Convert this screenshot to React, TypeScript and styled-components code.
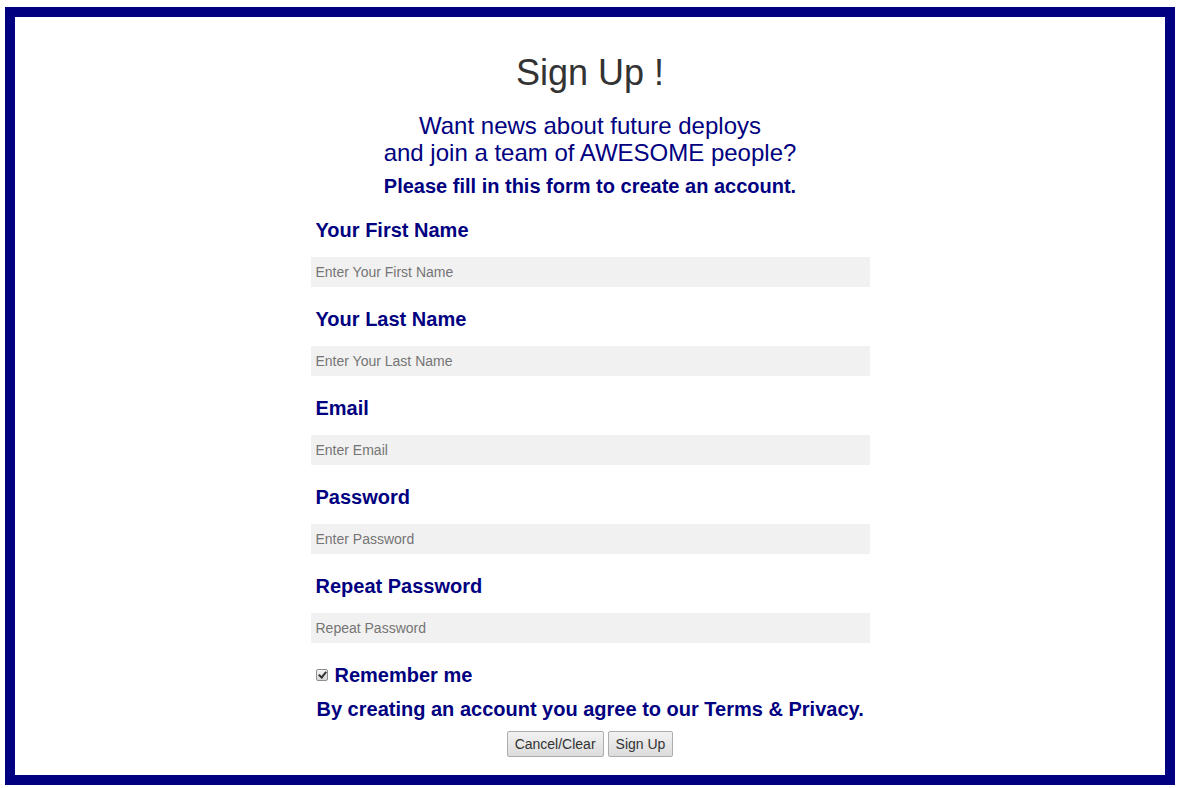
import { createGlobalStyle } from 'styled-components';
import styled from 'styled-components';

const GlobalStyle = createGlobalStyle`
  html, body {
    margin: 0;
    padding: 0;
    background: #fff;
    font-family: 'Liberation Sans', Arial, sans-serif;
  }
  * { box-sizing: border-box; }
`;

const Frame = styled.div`
  margin: 7px 4px 0 5px;
  height: 778px;
  border: 10px solid #000080;
  display: flex;
  flex-direction: column;
  align-items: center;
  padding-top: 35px;
`;

const Title = styled.h1`
  margin: 0;
  font-size: 36px;
  font-weight: 400;
  line-height: 42px;
  color: #333;
`;

const Intro = styled.p`
  margin: 18px 0 0;
  font-size: 24px;
  line-height: 27px;
  color: #000080;
  text-align: center;
`;

const Lead = styled.p`
  margin: 8px 0 0;
  font-size: 20px;
  font-weight: 700;
  line-height: 24px;
  color: #000080;
  text-align: center;
`;

const Form = styled.form`
  width: 559px;
  display: flex;
  flex-direction: column;
`;

const Field = styled.div`
  display: flex;
  flex-direction: column;
  padding-top: 20px;
`;

const Label = styled.label`
  padding-left: 5px;
  font-size: 20px;
  font-weight: 700;
  line-height: 24px;
  color: #000080;
  margin-bottom: 15px;
`;

const Input = styled.input`
  width: 100%;
  height: 30px;
  border: none;
  background: #f1f1f1;
  padding: 0 5px;
  font-family: 'Liberation Sans', Arial, sans-serif;
  font-size: 14px;
  color: #333;
  outline: none;
  &::placeholder { color: #757575; }
`;

const Remember = styled.label`
  display: flex;
  align-items: center;
  margin-top: 20px;
  padding-left: 5px;
  font-size: 20px;
  font-weight: 700;
  line-height: 24px;
  color: #000080;
`;

const Check = styled.input`
  appearance: none;
  position: relative;
  width: 12px;
  height: 12px;
  margin: 0 7px 0 0;
  border: 1px solid #8f8f8f;
  border-radius: 2px;
  background: linear-gradient(#f4f4f4, #d8d8d8);
  &:checked::after {
    content: '';
    position: absolute;
    left: 3px;
    top: 0px;
    width: 3px;
    height: 6px;
    border: solid #333;
    border-width: 0 2px 2px 0;
    transform: rotate(40deg);
  }
`;

const Terms = styled.p`
  margin: 10px 0 0;
  padding-left: 6px;
  font-size: 20px;
  font-weight: 700;
  line-height: 24px;
  color: #000080;
`;

const Buttons = styled.div`
  display: flex;
  justify-content: center;
  gap: 4px;
  margin-top: 10px;
`;

const Button = styled.button`
  height: 26px;
  padding: 0 7px;
  border: 1px solid #adadad;
  border-radius: 2px;
  background: linear-gradient(#f2f2f2, #dcdcdc);
  font-family: 'Liberation Sans', Arial, sans-serif;
  font-size: 14px;
  color: #333;
`;

const fields = [
  { label: 'Your First Name', placeholder: 'Enter Your First Name', type: 'text' },
  { label: 'Your Last Name', placeholder: 'Enter Your Last Name', type: 'text' },
  { label: 'Email', placeholder: 'Enter Email', type: 'email' },
  { label: 'Password', placeholder: 'Enter Password', type: 'password' },
  { label: 'Repeat Password', placeholder: 'Repeat Password', type: 'password' },
];

export default function App() {
  return (
    <>
      <GlobalStyle />
      <Frame>
        <Title>Sign Up !</Title>
        <Intro>
          Want news about future deploys
          <br />
          and join a team of AWESOME people?
        </Intro>
        <Lead>Please fill in this form to create an account.</Lead>
        <Form onSubmit={e => e.preventDefault()}>
          {fields.map(f => (
            <Field key={f.label}>
              <Label>{f.label}</Label>
              <Input type={f.type} placeholder={f.placeholder} />
            </Field>
          ))}
          <Remember>
            <Check type="checkbox" defaultChecked />
            Remember me
          </Remember>
          <Terms>By creating an account you agree to our Terms &amp; Privacy.</Terms>
          <Buttons>
            <Button type="reset">Cancel/Clear</Button>
            <Button type="submit">Sign Up</Button>
          </Buttons>
        </Form>
      </Frame>
    </>
  );
}
